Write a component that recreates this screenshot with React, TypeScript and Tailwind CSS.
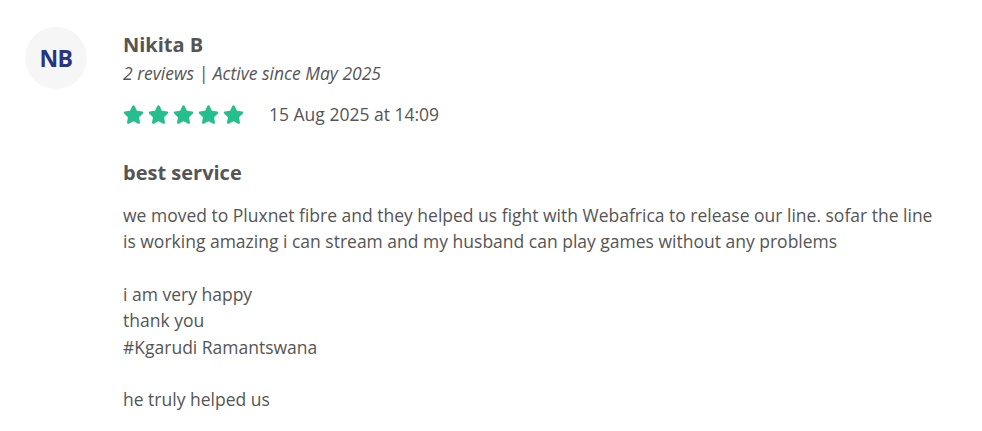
import React from "react";
import { FaStar } from "react-icons/fa";

export default function App() {
  return (
    <div
      className="w-[982px] h-[431px] bg-white flex pl-[25px] pt-[27px] gap-[36px] text-[#555555]"
      style={{ fontFamily: '"Open Sans", sans-serif' }}
    >
      <div className="w-[62px] h-[62px] rounded-full bg-[#f6f6f6] flex items-center justify-center shrink-0">
        <span className="text-[23px] font-bold text-[#283583] tracking-[-0.5px]">NB</span>
      </div>
      <div className="flex flex-col">
        <div className="text-[20px] font-bold leading-[26px] mt-[5px]">Nikita B</div>
        <div className="text-[17.5px] italic leading-[24px] mt-[3px]">2 reviews | Active since May 2025</div>
        <div className="flex items-center mt-[17px] h-[24px]">
          <div className="flex gap-[4px] text-[#24bf8d]">
            <FaStar size={21} />
            <FaStar size={21} />
            <FaStar size={21} />
            <FaStar size={21} />
            <FaStar size={21} />
          </div>
          <span className="ml-[25px] text-[17.5px] leading-[24px]">15 Aug 2025 at 14:09</span>
        </div>
        <div className="text-[20px] font-bold leading-[26px] mt-[34px]">best service</div>
        <div className="w-[820px] text-[17.5px] leading-[26.4px] mt-[15.5px] whitespace-pre-line">
          {"we moved to Pluxnet fibre and they helped us fight with Webafrica to release our line. sofar the line is working amazing i can stream and my husband can play games without any problems\n\ni am very happy\nthank you\n#Kgarudi Ramantswana\n\nhe truly helped us"}
        </div>
      </div>
    </div>
  );
}
